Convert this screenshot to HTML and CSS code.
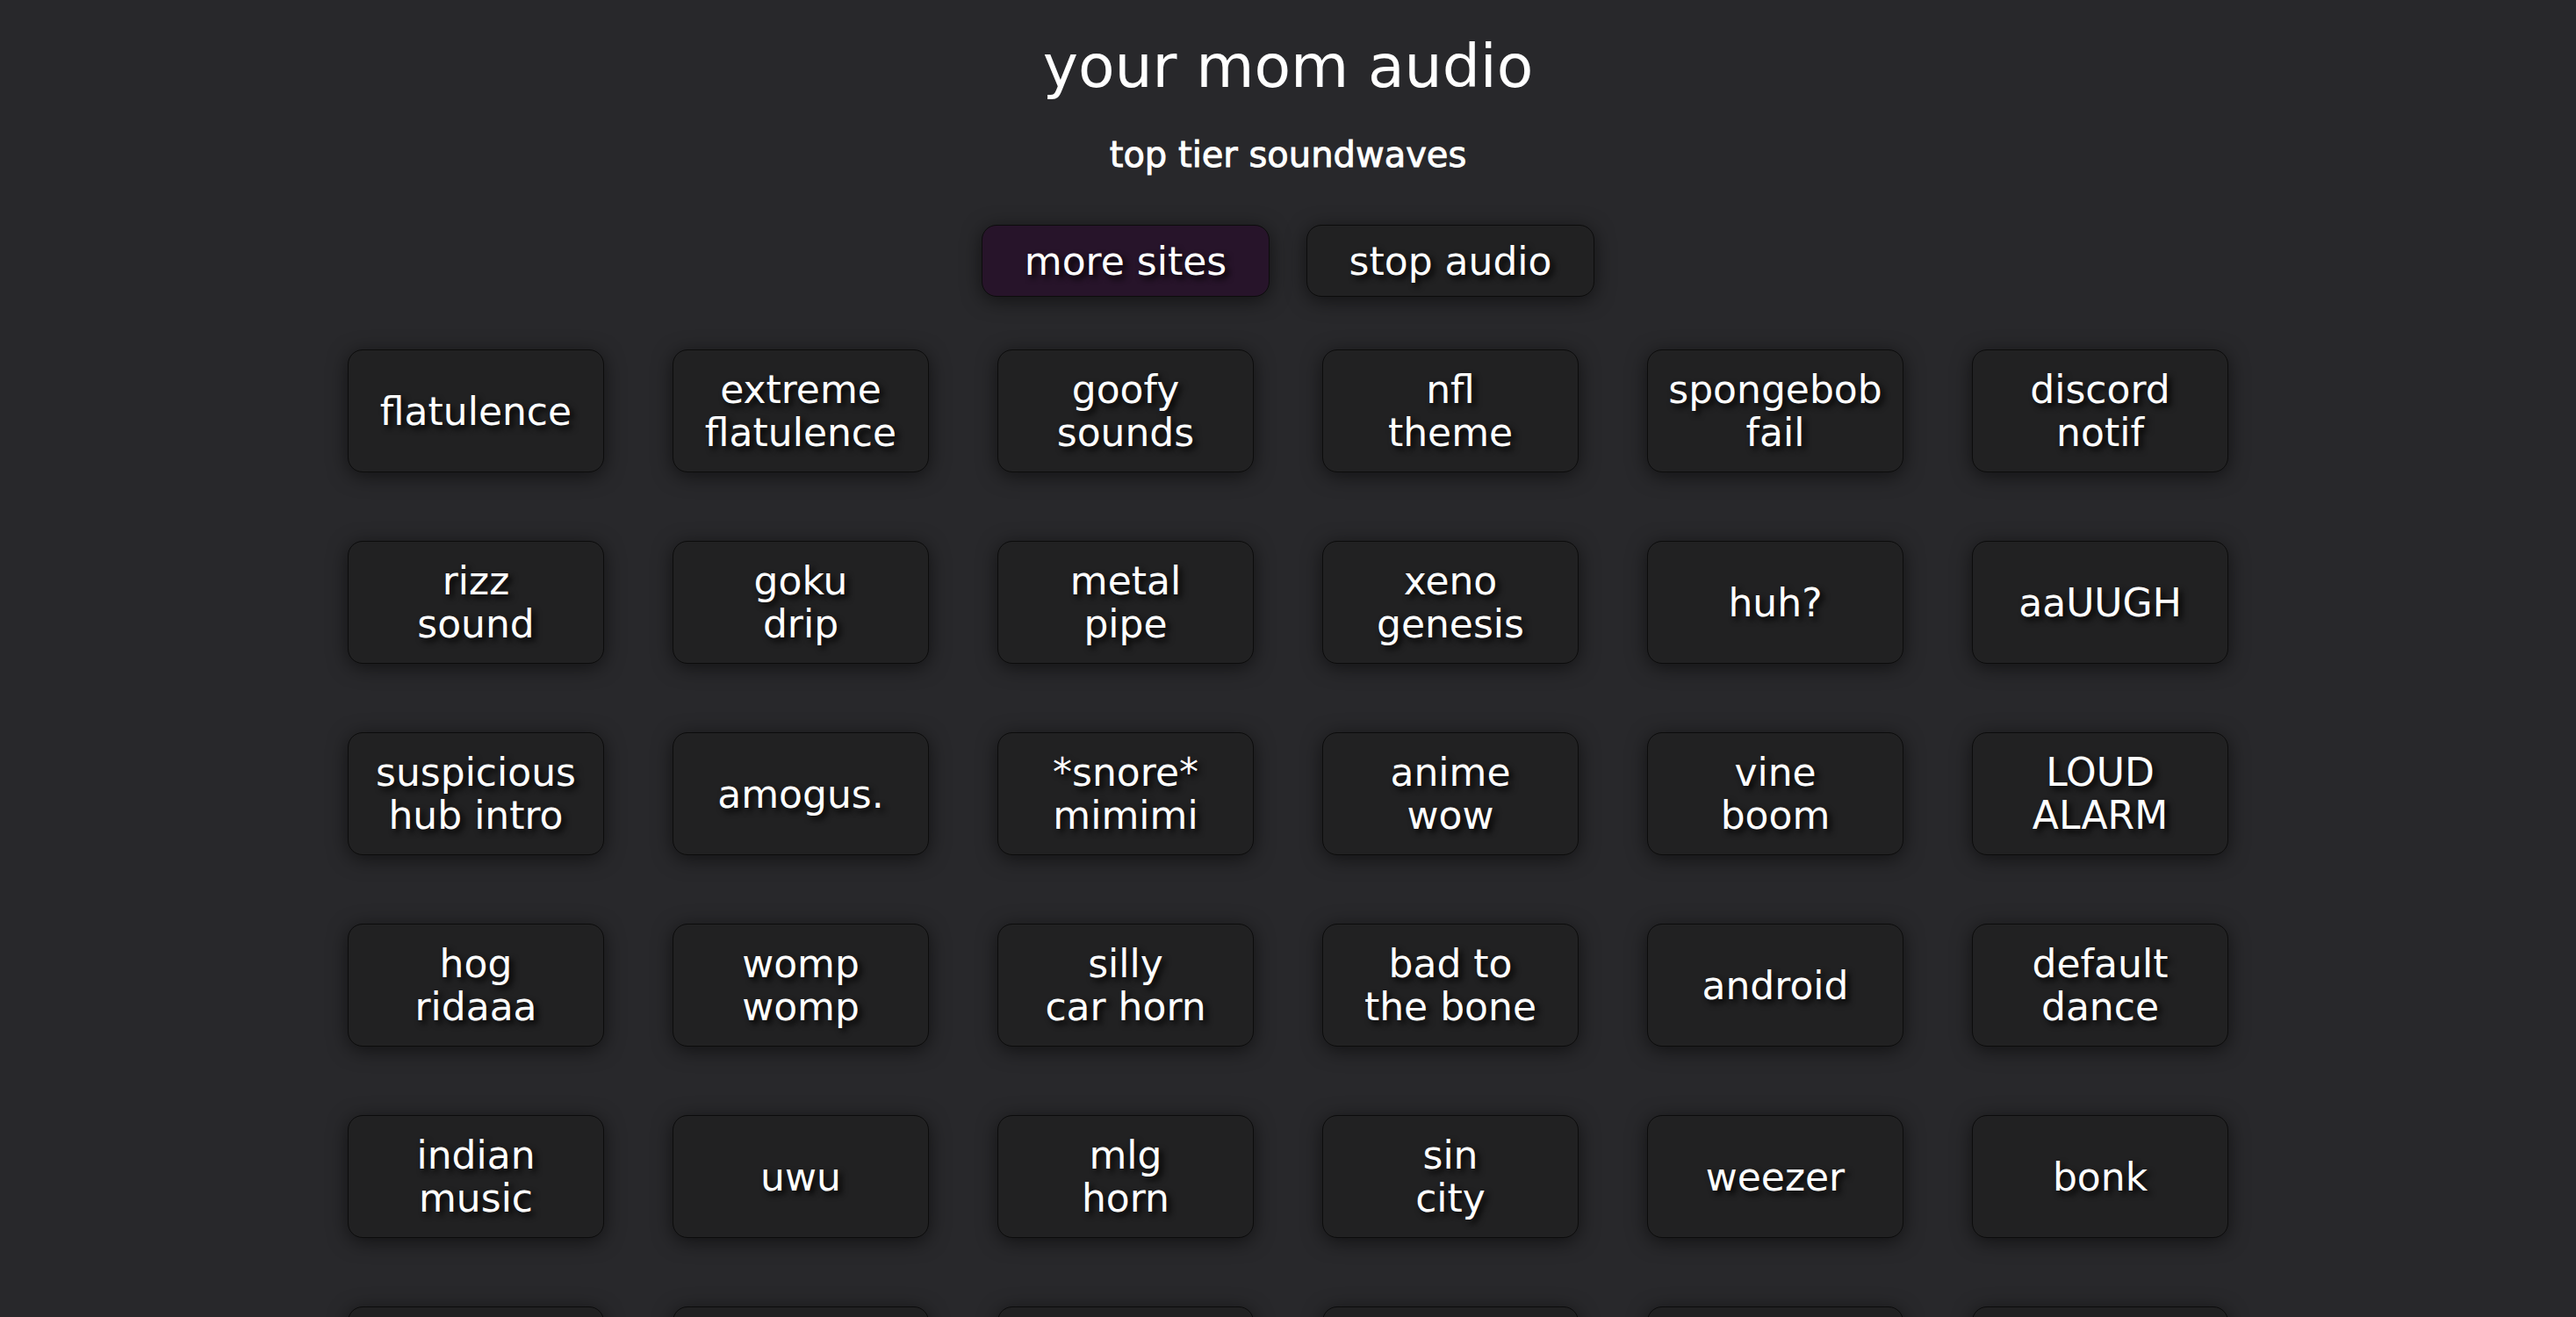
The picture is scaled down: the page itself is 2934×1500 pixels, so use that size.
FILE: index.html
```html
<!DOCTYPE html>
<html lang="en">
<head>
<meta charset="utf-8">
<title>your mom audio</title>
<link rel="stylesheet" href="styles.css">
</head>
<body>
<header class="header">
  <h1 class="title">your mom audio</h1>
  <p class="subtitle">top tier soundwaves</p>
  <div class="actions">
    <button class="btn btn-sites">more sites</button>
    <button class="btn">stop audio</button>
  </div>
</header>
<main class="grid">
  <button class="card">flatulence</button>
  <button class="card">extreme<br>flatulence</button>
  <button class="card">goofy<br>sounds</button>
  <button class="card">nfl<br>theme</button>
  <button class="card">spongebob<br>fail</button>
  <button class="card">discord<br>notif</button>

  <button class="card">rizz<br>sound</button>
  <button class="card">goku<br>drip</button>
  <button class="card">metal<br>pipe</button>
  <button class="card">xeno<br>genesis</button>
  <button class="card">huh?</button>
  <button class="card">aaUUGH</button>

  <button class="card">suspicious<br>hub intro</button>
  <button class="card">amogus.</button>
  <button class="card">*snore*<br>mimimi</button>
  <button class="card">anime<br>wow</button>
  <button class="card">vine<br>boom</button>
  <button class="card">LOUD<br>ALARM</button>

  <button class="card">hog<br>ridaaa</button>
  <button class="card">womp<br>womp</button>
  <button class="card">silly<br>car horn</button>
  <button class="card">bad to<br>the bone</button>
  <button class="card">android</button>
  <button class="card">default<br>dance</button>

  <button class="card">indian<br>music</button>
  <button class="card">uwu</button>
  <button class="card">mlg<br>horn</button>
  <button class="card">sin<br>city</button>
  <button class="card">weezer</button>
  <button class="card">bonk</button>

  <button class="card" aria-label="sound"></button>
  <button class="card" aria-label="sound"></button>
  <button class="card" aria-label="sound"></button>
  <button class="card" aria-label="sound"></button>
  <button class="card" aria-label="sound"></button>
  <button class="card" aria-label="sound"></button>
</main>
</body>
</html>
```

FILE: styles.css
```css
html, body {
  margin: 0;
  padding: 0;
}

body {
  background: #28282b;
  color: #ffffff;
  font-family: "DejaVu Sans", "Liberation Sans", sans-serif;
}

.header {
  display: flex;
  flex-direction: column;
  align-items: center;
  padding-top: 36px;
}

.title {
  margin: 0;
  font-size: 68px;
  font-weight: 400;
  line-height: 79px;
}

.subtitle {
  margin: 40px 0 0;
  font-size: 40px;
  font-weight: 400;
  line-height: 42px;
  -webkit-text-stroke: 0.9px #ffffff;
}

.actions {
  display: flex;
  gap: 42px;
  margin-top: 59px;
}

.btn,
.card {
  box-sizing: border-box;
  font-family: inherit;
  color: #ffffff;
  font-size: 44px;
  line-height: 49px;
  background: #212122;
  border: 1px solid #0c0c0c;
  border-radius: 17px;
  box-shadow: 0 4px 22px rgba(0, 0, 0, 0.55);
  text-shadow: 4px 4px 7px rgba(0, 0, 0, 0.95);
  padding: 0;
  cursor: pointer;
}

.btn {
  width: 328px;
  height: 82px;
}

.btn-sites {
  background: #27142a;
}

.grid {
  display: grid;
  grid-template-columns: repeat(6, 292px);
  grid-auto-rows: 140px;
  column-gap: 78px;
  row-gap: 78px;
  justify-content: center;
  margin-top: 60px;
  padding-bottom: 80px;
}

.card {
  width: 292px;
  height: 140px;
  display: flex;
  align-items: center;
  justify-content: center;
  text-align: center;
}
```
